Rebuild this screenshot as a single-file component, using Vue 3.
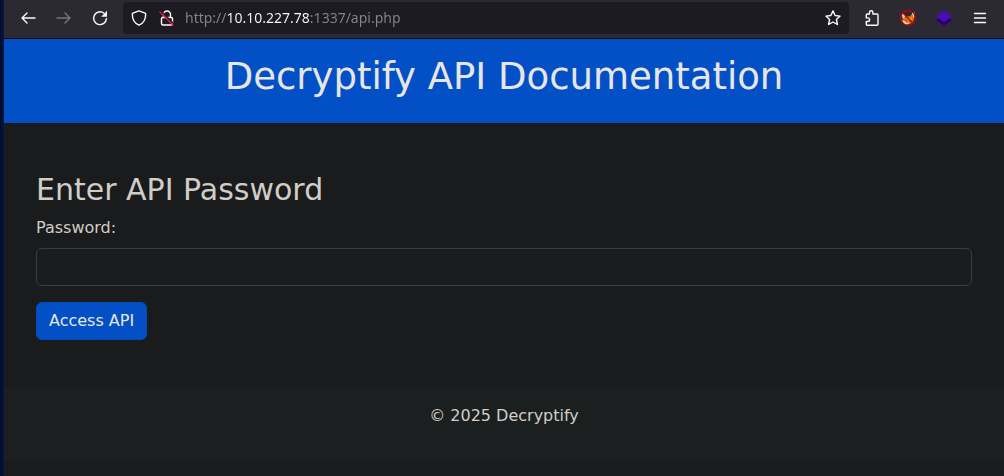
<script setup>
import { ref } from 'vue'

const address = ref('http://10.10.227.78:1337/api.php')
const password = ref('')
</script>

<template>
  <div class="desktop">
    <div class="window">
      <nav class="toolbar" aria-label="Browser toolbar">
        <button class="tool" type="button" aria-label="Back">
          <svg viewBox="0 0 16 16"><path d="M15 8H2M7 3L2 8l5 5" /></svg>
        </button>
        <button class="tool muted" type="button" aria-label="Forward">
          <svg viewBox="0 0 16 16"><path d="M1 8h13M9 3l5 5-5 5" /></svg>
        </button>
        <button class="tool" type="button" aria-label="Reload">
          <svg viewBox="0 0 16 16">
            <path d="M12 3.200A6.400 6.400 0 1 0 14.400 8.600" />
            <path class="solid" d="M15 .8v5.400a.5.5 0 0 1-.5.5H9.300z" />
          </svg>
        </button>

        <div class="address-bar">
          <button class="inner" type="button" aria-label="Tracking protection">
            <svg viewBox="0 0 16 16">
              <path d="M8 .9l6.100 2.300c.4.2.6.5.6.9 0 5-2.100 9.300-6.700 11.100C3.400 13.400 1.300 9.100 1.300 4.100c0-.4.2-.7.6-.9z" />
            </svg>
          </button>
          <button class="inner" type="button" aria-label="Connection not secure">
            <svg viewBox="0 0 16 16">
              <path d="M4.500 7V4.500a3.500 3.500 0 0 1 7 0V7M3.500 7.500h9a1 1 0 0 1 1 1v5a1.500 1.500 0 0 1-1.500 1.500H4a1.500 1.500 0 0 1-1.500-1.500v-5a1 1 0 0 1 1-1z" />
              <path class="gap" d="M2.500 1.500l12.500 12.500" />
              <path class="slash" d="M1 2l13 13" />
            </svg>
          </button>
          <input v-model="address" class="address" type="text" aria-label="Address" spellcheck="false" />
          <button class="inner" type="button" aria-label="Bookmark this page">
            <svg viewBox="0 0 16 16">
              <path d="M8 .9l2.100 4.600 5 .6-3.700 3.400 1 5L8 12l-4.400 2.500 1-5L.9 6.100l5-.6z" />
            </svg>
          </button>
        </div>

        <button class="tool" type="button" aria-label="Extensions">
          <svg viewBox="0 0 16 16">
            <path d="M5.500 4V2.500a1.700 1.700 0 0 1 3.400 0V4H13a1 1 0 0 1 1 1v9.200a1 1 0 0 1-1 1H3.300a1 1 0 0 1-1-1v-2.700h1.500a1.800 1.800 0 0 0 0-3.600H2.300V5a1 1 0 0 1 1-1z" />
          </svg>
        </button>
        <button class="tool" type="button" aria-label="Proxy switcher">
          <svg class="fill" viewBox="0 0 16 16">
            <path fill="#c9c6c4" d="M1.500 4.500l2.500-1 1.500 3-2.500 3z" />
            <path fill="#e8e4df" d="M12 3l2.300-.5.2 5-2 .5z" />
            <path fill="#dc7a10" d="M4 8l3.500-2 2.500.5L12 4l2 4-1 4-3.500 2H5L2 11z" />
            <path fill="#f39a22" d="M7 8l3-.5 2.500 1L11 11 8 10z" />
            <path fill="#dedad4" d="M2 10.500l2.500.5 2 2 2.500-.5-1 2H5z" />
            <path fill="#6b3a16" d="M5.500 9.500h1.300v1.200H5.500zM9.500 11h1.300v1H9.500z" />
            <circle cx="8" cy="8" r="7.300" fill="none" stroke="#c80006" stroke-width="1.200" />
            <path d="M2.800 2.800l10.400 10.400" fill="none" stroke="#b80006" stroke-width="1.500" />
          </svg>
        </button>
        <button class="tool" type="button" aria-label="Layers">
          <svg class="fill" viewBox="0 0 16 16">
            <path fill="#22007a" d="M8 4.500l8 5.500-8 5.700L0 10z" />
            <path fill="#4b0bb5" d="M8 .2l7.900 6L8 12.200.1 6.200z" />
          </svg>
        </button>
        <button class="tool" type="button" aria-label="Menu">
          <svg viewBox="0 0 16 16"><path d="M2.500 3.500h11M2.500 8h11M2.500 12.500h11" /></svg>
        </button>
      </nav>

      <header class="banner">
        <h1>Decryptify API Documentation</h1>
      </header>

      <main>
        <h2>Enter API Password</h2>
        <form @submit.prevent>
          <label for="password">Password:</label>
          <input id="password" v-model="password" class="field" type="password" />
          <button class="submit" type="submit">Access API</button>
        </form>
      </main>

      <footer>
        <p>© 2025 Decryptify</p>
      </footer>
    </div>
  </div>
</template>

<style>
html {
  background: #1a1b1c;
}
</style>

<style scoped>
.desktop,
.desktop * {
  box-sizing: border-box;
}

.desktop {
  min-height: 100vh;
  padding-left: 4px;
  background: linear-gradient(90deg, #030d30, #04103a 3px, #0a1d40 4px, #0a1d40);
  font: 16px/24px "DejaVu Sans", sans-serif;
  color: #d1cdc7;
}

.window {
  min-height: 100vh;
  background: #1a1b1c;
}

button {
  border: 0;
  font: inherit;
  cursor: pointer;
}

.toolbar {
  display: flex;
  align-items: center;
  padding: 2px 6px 4px;
  background: #2b2a33;
  border-bottom: 1px solid #0c0c0d;
}

.tool,
.inner {
  display: flex;
  flex: none;
  align-items: center;
  justify-content: center;
  height: 32px;
  padding: 0;
  background: none;
  color: #fbfbfe;
}

.tool {
  width: 36px;
}

.inner {
  width: 28px;
}

.muted {
  color: #77767d;
}

svg {
  width: 16px;
  height: 16px;
  fill: none;
  stroke: currentColor;
  stroke-width: 1.4;
  stroke-linecap: round;
  stroke-linejoin: round;
}

.fill {
  stroke: none;
}

.solid {
  fill: currentColor;
  stroke: none;
}

.gap {
  stroke: #1c1b22;
  stroke-width: 1.5;
}

.slash {
  stroke: #e2143c;
  stroke-width: 1.5;
}

.address-bar {
  display: flex;
  flex: 1;
  min-width: 0;
  margin: 0 5px;
  padding: 0 2px;
  border-radius: 4px;
  background: #1c1b22;
}

.address {
  flex: 1;
  min-width: 0;
  height: 32px;
  margin-left: 4px;
  padding: 0;
  border: 0;
  outline: 0;
  background: linear-gradient(90deg, #85848a 42px, #fbfbfe 42px, #fbfbfe 125px, #85848a 125px);
  background-clip: text;
  color: transparent;
  font: 14px/32px "Noto Sans", sans-serif;
}

.banner {
  padding: 16px 16px 24px;
  background: #0350c6;
  color: #e8e6e3;
  text-align: center;
}

h1,
h2 {
  margin: 0;
  font-weight: 400;
}

h1 {
  font-size: 37px;
  line-height: 44px;
}

main {
  padding: 48px 32px;
}

h2 {
  margin-bottom: 8px;
  font-size: 30px;
  line-height: 37px;
}

form {
  display: flex;
  flex-direction: column;
  align-items: flex-start;
}

.field {
  width: 100%;
  height: 38px;
  margin: 8px 0 16px;
  padding: 6px 12px;
  border: 1px solid #3b3e40;
  border-radius: 6px;
  background: #1a1b1c;
  color: inherit;
  font: inherit;
}

.submit {
  padding: 6px 12px;
  border: 1px solid #024bb8;
  border-radius: 6px;
  background: #0350c6;
  color: #e8e6e3;
}

footer {
  padding: 16px 16px 32px;
  background: #1c1f20;
  text-align: center;
}

footer p {
  margin: 0;
}
</style>
